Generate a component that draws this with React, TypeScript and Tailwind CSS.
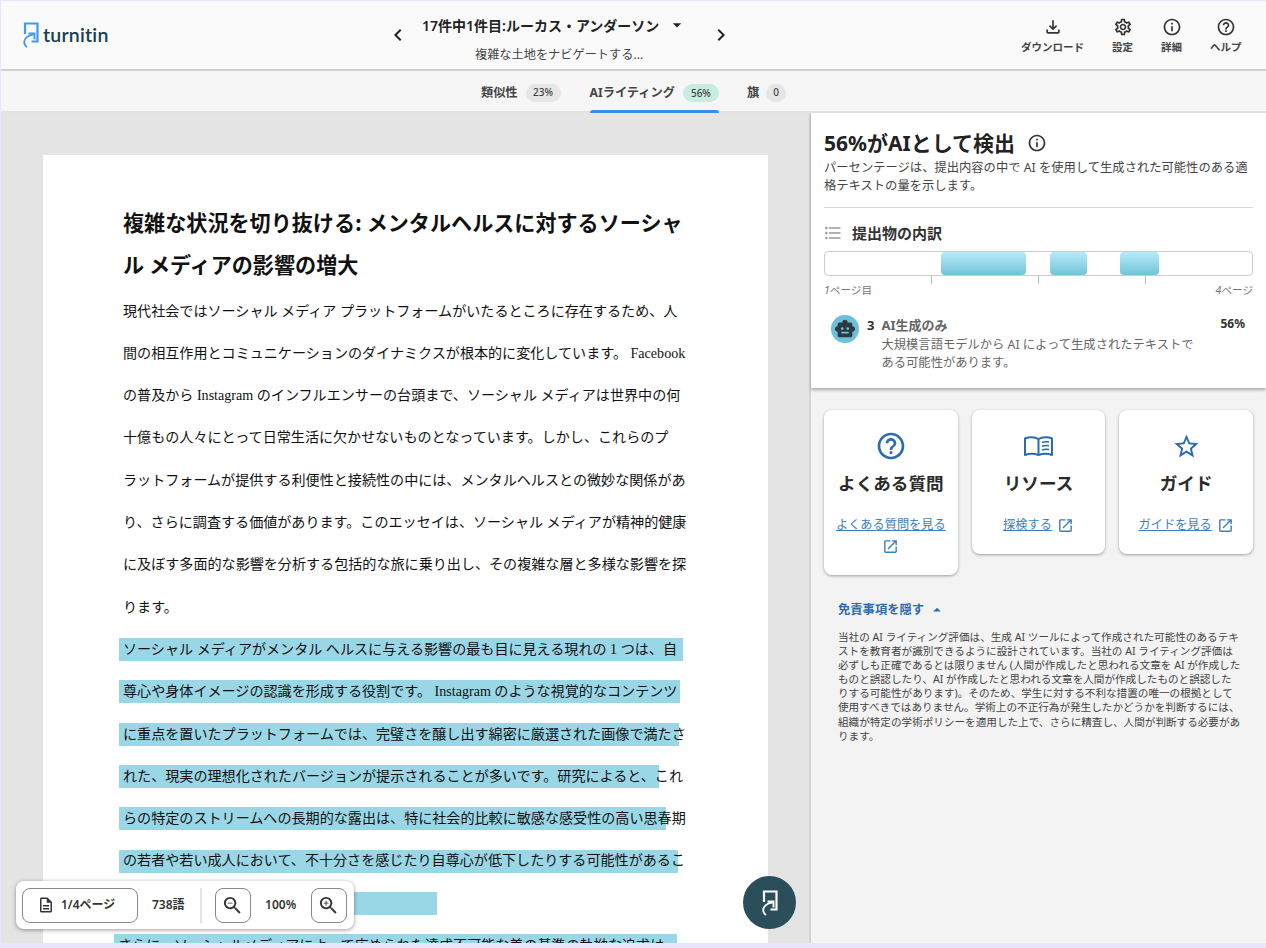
import {
  MdChevronLeft,
  MdChevronRight,
  MdArrowDropDown,
  MdArrowDropUp,
  MdOutlineFileDownload,
  MdOutlineSettings,
  MdInfoOutline,
  MdHelpOutline,
  MdFormatListBulleted,
  MdSmartToy,
  MdStarBorder,
  MdOpenInNew,
  MdOutlineDescription,
  MdZoomIn,
  MdZoomOut,
} from 'react-icons/md'

const uiFont = "font-['Noto_Sans','Noto_Sans_CJK_JP',sans-serif]"

const lines = [
  { text: '現代社会ではソーシャル メディア プラットフォームがいたるところに存在するため、人' },
  { text: '間の相互作用とコミュニケーションのダイナミクスが根本的に変化しています。 Facebook' },
  { text: 'の普及から Instagram のインフルエンサーの台頭まで、ソーシャル メディアは世界中の何' },
  { text: '十億もの人々にとって日常生活に欠かせないものとなっています。しかし、これらのプ' },
  { text: 'ラットフォームが提供する利便性と接続性の中には、メンタルヘルスとの微妙な関係があ' },
  { text: 'り、さらに調査する価値があります。このエッセイは、ソーシャル メディアが精神的健康' },
  { text: 'に及ぼす多面的な影響を分析する包括的な旅に乗り出し、その複雑な層と多様な影響を探' },
  { text: 'ります。' },
  { text: 'ソーシャル メディアがメンタル ヘルスに与える影響の最も目に見える現れの 1 つは、自', bar: 'ml-0 w-[564px]' },
  { text: '尊心や身体イメージの認識を形成する役割です。 Instagram のような視覚的なコンテンツ', bar: 'ml-0 w-[561px]' },
  { text: 'に重点を置いたプラットフォームでは、完璧さを醸し出す綿密に厳選された画像で満たさ', bar: 'ml-0 w-[560px]' },
  { text: 'れた、現実の理想化されたバージョンが提示されることが多いです。研究によると、これ', bar: 'ml-0 w-[540px]' },
  { text: 'らの特定のストリームへの長期的な露出は、特に社会的比較に敏感な感受性の高い思春期', bar: 'ml-0 w-[547px]' },
  { text: 'の若者や若い成人において、不十分さを感じたり自尊心が低下したりする可能性があるこ', bar: 'ml-0 w-[559px]' },
  { text: '', bar: 'ml-0 w-[318px]' },
  { text: 'さらに、ソーシャルメディアによって広められた達成不可能な美の基準の執拗な追求は、', bar: '-ml-[5px] w-[563px]' },
]

function TurnitinMark({ className }: { className: string }) {
  return (
    <svg viewBox="0 0 16 26" fill="none" stroke="currentColor" className={className}>
      <path d="M2 12V1.500h12.500V19.500H8.500" strokeWidth="2.200" />
      <path d="M10.500 12.500C5 13 0.500 17 1.300 21C1.700 23 2.800 24.300 4 25" strokeWidth="1.800" />
      <path d="M5.500 11.500h6v6" strokeWidth="1.900" />
    </svg>
  )
}

function BookIcon() {
  return (
    <svg viewBox="0 0 29 20" width="29" height="20" fill="none" stroke="currentColor" strokeWidth="2">
      <path d="M1 2.500C4.500 0.700 10.500 0.500 14.500 3C18.500 0.500 24.500 0.700 28 2.500V19C24 17.500 18.500 17.500 14.500 19C10.500 17.500 5 17.500 1 19Z" strokeLinejoin="round" />
      <path d="M14.500 3V19" />
      <path d="M18 6.500C20 5.700 22.500 5.500 25 6M18 10.300C20 9.500 22.500 9.300 25 9.800M18 14C20 13.200 22.500 13 25 13.500" strokeWidth="1.600" />
    </svg>
  )
}

function HeaderAction({ icon, label }: { icon: React.ReactNode; label: string }) {
  return (
    <div className="flex flex-col items-center gap-[3px] text-[#333]">
      {icon}
      <span className="text-[10.500px] leading-[14px] font-semibold text-[#444]">{label}</span>
    </div>
  )
}

function Pill({ children, className }: { children: React.ReactNode; className: string }) {
  return (
    <span className={`flex h-[18px] items-center justify-center rounded-full text-[10px] font-medium text-[#444] ${className}`}>
      {children}
    </span>
  )
}

function LinkCard({
  icon,
  title,
  link,
  wrap,
}: {
  icon: React.ReactNode
  title: string
  link: string
  wrap?: boolean
}) {
  return (
    <div className="flex flex-col items-center rounded-lg bg-white px-2 pt-[22px] pb-[20px] shadow-[0_1px_3px_rgba(0,0,0,0.35)]">
      <div className="flex h-[28px] items-center justify-center text-[#2b6cb0]">{icon}</div>
      <h3 className="mt-[10px] text-[17.600px] leading-[26px] font-bold text-[#2b2b2b]">{title}</h3>
      <div className={`mt-[20px] flex items-center justify-center text-[#3a7fc1] ${wrap ? 'flex-col gap-[4px]' : 'gap-[5px]'}`}>
        <span className="text-[12.200px] leading-[18px] underline">{link}</span>
        <MdOpenInNew size={17} />
      </div>
    </div>
  )
}

export default function App() {
  return (
    <div className={`h-[948px] w-[1266px] overflow-hidden bg-[#ebe4fb] pt-px pl-px ${uiFont}`}>
      <div className="flex h-[942px] flex-col overflow-hidden">
        {/* top bar */}
        <header className="flex h-[70px] shrink-0 border-b-2 border-[#d0d0d0] bg-[#fafafa]">
          <div className="flex w-[380px] items-center pb-[1px] pl-[22px]">
            <TurnitinMark className="h-[26px] w-[16px] text-[#3d9bf5]" />
            <span className="ml-[4px] font-['Lato',sans-serif] text-[19.500px] leading-none font-semibold tracking-[0.2px] text-[#173f4f]">turnitin</span>
          </div>
          <div className="flex w-[374px] items-center">
            <MdChevronLeft size={24} className="ml-[5px] text-[#222]" />
            <div className="ml-[12px] flex w-[288px] flex-col items-start pt-[5px]">
              <div className="flex h-[20px] items-center pt-[8px]">
                <span className="text-[14px] font-semibold whitespace-nowrap text-[#222]">17件中1件目:ルーカス・アンダーソン</span>
                <MdArrowDropDown size={20} className="ml-[8px] text-[#222]" />
              </div>
              <span className="mt-[15px] ml-[53px] text-[12.200px] leading-[18px] text-[#444]">複雑な土地をナビゲートする...</span>
            </div>
            <MdChevronRight size={24} className="ml-[-1px] text-[#222]" />
          </div>
          <div className="flex flex-1 items-start pt-[16px]">
            <div className="ml-[266px] flex gap-[28px]">
              <HeaderAction icon={<MdOutlineFileDownload size={20} />} label="ダウンロード" />
              <HeaderAction icon={<MdOutlineSettings size={20} />} label="設定" />
              <HeaderAction icon={<MdInfoOutline size={20} />} label="詳細" />
              <HeaderAction icon={<MdHelpOutline size={20} />} label="ヘルプ" />
            </div>
          </div>
        </header>

        {/* tabs */}
        <nav className="flex h-[42px] shrink-0 items-center border-b-2 border-[#e2e2e2] bg-[#f6f6f6] pt-[4px] pl-[480px] text-[12.200px] font-bold text-[#444]">
          <div className="flex items-center gap-[8px]">
            <span>類似性</span>
            <Pill className="w-[35px] bg-[#e6e6e6]">23%</Pill>
          </div>
          <div className="relative ml-[29px] flex h-full items-center gap-[8px]">
            <span>AIライティング</span>
            <Pill className="w-[36px] bg-[#c8ecdf]">56%</Pill>
            <div className="absolute right-0 -bottom-[2px] left-0 h-[3px] rounded-t bg-[#3b8ee6]" />
          </div>
          <div className="ml-[28px] flex items-center gap-[7px]">
            <span>旗</span>
            <Pill className="w-[20px] bg-[#e6e6e6]">0</Pill>
          </div>
        </nav>

        <div className="relative flex min-h-0 flex-1">
          {/* document pane */}
          <main className="w-[810px] shrink-0 overflow-hidden border-r-2 border-[#d6d6d6] bg-[#e4e4e4] pt-[42px] pl-[42px]">
            <article className="h-[900px] w-[725px] bg-white pt-[46px] font-['Liberation_Serif','Noto_Sans_CJK_JP',sans-serif] text-[14.080px] text-[#111]">
              <h1 className="pr-[80px] pl-[80px] font-['Noto_Sans_CJK_JP',sans-serif] text-[21.100px] leading-[42px] font-bold text-[#111]">
                複雑な状況を切り抜ける: メンタルヘルスに対するソーシャル メディアの影響の増大
              </h1>
              <div className="mt-[5px]">
                {lines.map((line, i) => (
                  <div key={i} className="flex h-[42.300px] items-center pl-[76px] whitespace-nowrap">
                    <span className={`flex h-[23px] items-center pl-[4px] ${line.bar ? `bg-[#9ad7e6] ${line.bar}` : ''}`}>
                      {line.text}
                    </span>
                  </div>
                ))}
              </div>
            </article>
          </main>

          {/* page toolbar */}
          <div className="absolute top-[768px] left-[15px] flex h-[48px] w-[338px] items-center rounded-lg bg-white pl-[6px] text-[12px] font-semibold text-[#333] shadow-[0_1px_4px_rgba(0,0,0,0.4)]">
            <div className="flex h-[35px] w-[116px] items-center rounded-lg border border-[#888] pl-[14px]">
              <MdOutlineDescription size={18} />
              <span className="ml-[6px]">1/4ページ</span>
            </div>
            <span className="ml-[14px]">738語</span>
            <div className="mr-[13px] ml-[15px] h-[35px] w-[2px] bg-[#e4e4e4]" />
            <div className="flex h-[35px] w-[36px] items-center justify-center rounded-lg border border-[#888]">
              <MdZoomOut size={23} />
            </div>
            <span className="w-[60px] text-center">100%</span>
            <div className="flex h-[35px] w-[36px] items-center justify-center rounded-lg border border-[#888]">
              <MdZoomIn size={23} />
            </div>
          </div>

          {/* floating turnitin button */}
          <div className="absolute top-[763px] left-[742px] flex h-[53px] w-[53px] items-center justify-center rounded-full bg-[#2a4f5b]">
            <TurnitinMark className="h-[26px] w-[16px] text-white" />
          </div>

          {/* side panel */}
          <aside className="min-w-0 flex-1 bg-[#f3f3f3]">
            <section className="h-[275px] bg-white px-[13px] pt-[16px] shadow-[0_2px_3px_rgba(0,0,0,0.3)]">
              <div className="flex items-center">
                <h2 className="text-[21px] leading-[28px] font-bold text-[#222]">56%がAIとして検出</h2>
                <MdInfoOutline size={20} className="ml-[12px] text-[#333]" />
              </div>
              <p className="mt-[2px] border-b border-[#d8d8d8] pb-[12px] text-[12.300px] leading-[18px] text-[#444]">
                パーセンテージは、提出内容の中で AI を使用して生成された可能性のある適格テキストの量を示します。
              </p>
              <div className="mt-[14px] flex items-center">
                <MdFormatListBulleted size={20} className="ml-[-1px] text-[#999]" />
                <h3 className="ml-[9px] text-[15px] leading-[22px] font-bold text-[#333]">提出物の内訳</h3>
              </div>

              <div className="mt-[7px] flex h-[25px] rounded border border-[#ccc] pl-[116px]">
                <div className="h-full w-[85px] rounded bg-gradient-to-b from-[#b6ecf8] to-[#72c3da]" />
                <div className="ml-[24px] h-full w-[37px] rounded bg-gradient-to-b from-[#b6ecf8] to-[#72c3da]" />
                <div className="ml-[33px] h-full w-[39px] rounded bg-gradient-to-b from-[#b6ecf8] to-[#72c3da]" />
              </div>
              <div className="flex h-[8px] justify-between px-[107px]">
                <div className="w-[1px] bg-[#bbb]" />
                <div className="w-[1px] bg-[#bbb]" />
                <div className="w-[1px] bg-[#bbb]" />
              </div>
              <div className="-mt-[1px] flex justify-between text-[10.600px] leading-[14px] text-[#777]">
                <span><i>1</i>ページ目</span>
                <span><i>4</i>ページ</span>
              </div>

              <div className="mt-[18px] flex pl-[7px]">
                <div className="flex h-[28px] w-[28px] shrink-0 items-center justify-center rounded-full bg-[#6cc0d9] text-[#2b3a42]">
                  <MdSmartToy size={22} />
                </div>
                <span className="ml-[8px] text-[13px] leading-[20px] font-bold text-[#333]">3</span>
                <div className="ml-[7px] w-[322px]">
                  <div className="text-[13px] leading-[20px] font-bold text-[#666]">AI生成のみ</div>
                  <p className="mt-[1px] text-[12.300px] leading-[18px] text-[#666]">
                    大規模言語モデルから AI によって生成されたテキストである可能性があります。
                  </p>
                </div>
                <span className="ml-auto pr-[8px] text-[12px] leading-[18px] font-bold text-[#333]">56%</span>
              </div>
            </section>

            <div className="grid grid-cols-3 items-start gap-[14px] px-[13px] pt-[22px]">
              <LinkCard icon={<MdHelpOutline size={32} />} title="よくある質問" link="よくある質問を見る" wrap />
              <LinkCard icon={<BookIcon />} title="リソース" link="探検する" />
              <LinkCard icon={<MdStarBorder size={29} />} title="ガイド" link="ガイドを見る" />
            </div>

            <div className="px-[27px] pt-[26px]">
              <div className="flex h-[18px] items-center text-[12.300px] font-bold text-[#2b6cb0]">
                免責事項を隠す
                <MdArrowDropUp size={18} className="ml-[4px]" />
              </div>
              <p className="mt-[11px] w-[404px] text-[10.600px] leading-[14.100px] text-[#444]">
                当社の AI ライティング評価は、生成 AI ツールによって作成された可能性のあるテキストを教育者が識別できるように設計されています。当社の AI ライティング評価は必ずしも正確であるとは限りません (人間が作成したと思われる文章を AI が作成したものと誤認したり、AI が作成したと思われる文章を人間が作成したものと誤認したりする可能性があります)。そのため、学生に対する不利な措置の唯一の根拠として使用すべきではありません。学術上の不正行為が発生したかどうかを判断するには、組織が特定の学術ポリシーを適用した上で、さらに精査し、人間が判断する必要があります。
              </p>
            </div>
          </aside>
        </div>
      </div>
    </div>
  )
}
